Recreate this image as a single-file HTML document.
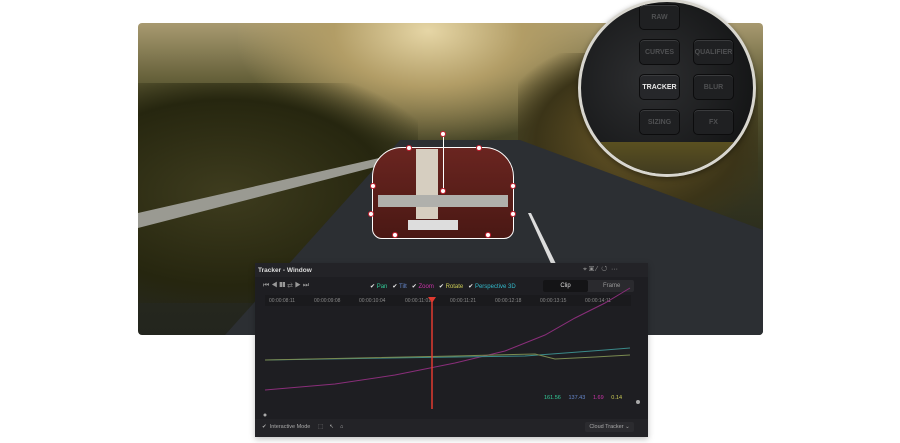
<!DOCTYPE html>
<html><head><style>
*{margin:0;padding:0;box-sizing:border-box}
body{width:900px;height:443px;background:#fff;position:relative;overflow:hidden;font-family:"Liberation Sans",sans-serif}
.photo{position:absolute;left:138px;top:23px;width:625px;height:312px;border-radius:4px;overflow:hidden;
background:linear-gradient(180deg,#a89a70 0%,#5e5a34 20%,#3a3a20 45%,#2a2c1e 70%,#23251e 100%)}
.p{position:absolute}
.circ{position:absolute;left:578px;top:-1px;width:178px;height:178px;border-radius:50%;background:radial-gradient(circle at 40% 45%,#2e2f31,#151617 75%);border:3px solid #d8d6cf;box-shadow:0 2px 6px rgba(0,0,0,.4);overflow:hidden}
.k{position:absolute;width:41px;height:26px;border-radius:5px;background:#1f2022;border:1px solid #0c0c0d;box-shadow:inset 0 1px 0 #3a3b3d;color:#4f5052;font-size:7px;font-weight:bold;text-align:center;line-height:25px}
.panel{position:absolute;left:255px;top:263px;width:393px;height:174px;background:#1e1e22;box-shadow:0 2px 6px rgba(0,0,0,.25);color:#bbb;font-size:6px}
.t{position:absolute}
.d{position:absolute;width:6px;height:6px;border-radius:50%;background:#fff;border:1.5px solid #c23}
</style></head><body>
<div class="photo">
 <div class="p" style="left:100px;top:-20px;width:380px;height:140px;background:radial-gradient(ellipse at 50% 20%,#e6d6a6 0%,#b29d66 35%,transparent 72%)"></div>
 <div class="p" style="left:-40px;top:60px;width:320px;height:220px;background:radial-gradient(ellipse at 40% 50%,#3e3c1e,#26260f 60%,transparent 85%)"></div>
 <div class="p" style="left:380px;top:30px;width:240px;height:170px;background:radial-gradient(ellipse at 50% 50%,#6d5a28,#3b3418 60%,transparent 85%)"></div>
 <div class="p" style="left:0;top:0;width:625px;height:312px;background:#2c2f33;clip-path:polygon(262px 117px,382px 117px,625px 207px,625px 312px,87px 312px)"></div>
 <div class="p" style="left:0;top:0;width:625px;height:312px;background:#9a9a92;clip-path:polygon(0 190px,250px 133px,252px 140px,0 205px)"></div>
 <div class="p" style="left:0;top:0;width:625px;height:312px;background:#ddd;clip-path:polygon(390px 190px,393px 190px,420px 245px,415px 245px)"></div>
 <div class="p" style="left:234px;top:124px;width:142px;height:92px;border-radius:30px 30px 10px 10px;background:linear-gradient(180deg,#6a2520,#4a1814);border:1.5px solid #fff"></div>
 <div class="p" style="left:278px;top:126px;width:22px;height:70px;background:#d6cec0"></div>
 <div class="p" style="left:240px;top:172px;width:130px;height:12px;background:#b0b0ac"></div>
 <div class="p" style="left:270px;top:197px;width:50px;height:10px;background:#ddd"></div>
 <div class="p" style="left:305px;top:110px;width:1px;height:60px;background:#fff"></div>
 <div class="d" style="left:302px;top:108px"></div><div class="d" style="left:302px;top:165px"></div>
 <div class="d" style="left:268px;top:122px"></div><div class="d" style="left:338px;top:122px"></div>
 <div class="d" style="left:232px;top:160px"></div><div class="d" style="left:372px;top:160px"></div>
 <div class="d" style="left:254px;top:209px"></div><div class="d" style="left:347px;top:209px"></div>
 <div class="d" style="left:230px;top:188px"></div><div class="d" style="left:372px;top:188px"></div>
</div>
<div class="circ">
 <div class="k" style="left:58px;top:2px">RAW</div>
 <div class="k" style="left:58px;top:37px">CURVES</div>
 <div class="k" style="left:112px;top:37px">QUALIFIER</div>
 <div class="k" style="left:58px;top:72px;color:#e8e8e8;background:#26272a">TRACKER</div>
 <div class="k" style="left:112px;top:72px">BLUR</div>
 <div class="k" style="left:58px;top:107px">SIZING</div>
 <div class="k" style="left:112px;top:107px">FX</div>
 <div class="p" style="left:-10px;top:140px;width:200px;height:40px;background:linear-gradient(180deg,#5a5020,#3a3620)"></div>
</div>
<div class="panel">
 <div class="t" style="left:0;top:0;width:393px;height:14px;background:#232327"></div>
 <div class="t" style="left:3px;top:4px;font-size:6.5px;font-weight:bold;color:#ddd">Tracker - Window</div>
 <div class="t" style="left:328px;top:3px;color:#999;font-size:7px">⌖ ▣ ⁄ &nbsp;↺ &nbsp;···</div>
 <div class="t" style="left:8px;top:19px;color:#999;font-size:7px">⏮ ◀ ❚❚ ⇄ ▶ ⏭</div>
 <div class="t" style="left:115px;top:20px;font-size:6px"><span style="color:#eee">✔</span> <span style="color:#3c9">Pan</span> &nbsp; <span style="color:#eee">✔</span> <span style="color:#68c">Tilt</span> &nbsp; <span style="color:#eee">✔</span> <span style="color:#c3a">Zoom</span> &nbsp; <span style="color:#eee">✔</span> <span style="color:#cc5">Rotate</span> &nbsp; <span style="color:#eee">✔</span> <span style="color:#3bc">Perspective 3D</span></div>
 <div class="t" style="left:288px;top:17px;width:91px;height:12px;background:#2a2a2e;border-radius:2px"></div>
 <div class="t" style="left:288px;top:17px;width:45px;height:12px;background:#141416;border-radius:2px;text-align:center;line-height:12px;color:#ddd">Clip</div>
 <div class="t" style="left:348px;top:20px;color:#999">Frame</div>
 <div class="t" style="left:10px;top:32px;width:366px;height:11px;background:#1a1a1d"></div>
 <div class="t" style="left:14px;top:35px;color:#888;font-size:5px">00:00:08:11</div>
 <div class="t" style="left:59px;top:35px;color:#888;font-size:5px">00:00:09:08</div>
 <div class="t" style="left:104px;top:35px;color:#888;font-size:5px">00:00:10:04</div>
 <div class="t" style="left:150px;top:35px;color:#888;font-size:5px">00:00:11:01</div>
 <div class="t" style="left:195px;top:35px;color:#888;font-size:5px">00:00:11:21</div>
 <div class="t" style="left:240px;top:35px;color:#888;font-size:5px">00:00:12:18</div>
 <div class="t" style="left:285px;top:35px;color:#888;font-size:5px">00:00:13:15</div>
 <div class="t" style="left:330px;top:35px;color:#888;font-size:5px">00:00:14:11</div>
 <svg class="t" style="left:0;top:0" width="393" height="174">
  <polyline fill="none" stroke="#8a2e7a" stroke-width="1" points="10,127 80,121 140,112 200,100 250,88 290,72 320,55 350,40 375,25"/>
  <polyline fill="none" stroke="#3a8a8a" stroke-width="1" points="10,97 200,94 270,93 310,90 350,87 375,85"/>
  <polyline fill="none" stroke="#7a8a50" stroke-width="1" points="10,97 200,93 280,91 300,96 340,94 375,92"/>
  <line x1="177" y1="37" x2="177" y2="146" stroke="#e03a30" stroke-width="1.5"/>
  <polygon points="173,34 181,34 177,40" fill="#e03a30"/>
  <circle cx="10" cy="152" r="1.5" fill="#aaa"/><circle cx="383" cy="139" r="2" fill="#aaa"/>
 </svg>
 <div class="t" style="left:289px;top:132px;font-size:5.5px"><span style="color:#3c9">161.56</span> &nbsp;&nbsp;&nbsp; <span style="color:#68c">137.43</span> &nbsp;&nbsp;&nbsp; <span style="color:#c3a">1.69</span> &nbsp;&nbsp;&nbsp; <span style="color:#cc5">0.14</span></div>
 <div class="t" style="left:0;top:156px;width:393px;height:18px;background:#232327"></div>
 <div class="t" style="left:7px;top:161px;color:#aaa;font-size:5.5px">✔ &nbsp;Interactive Mode &nbsp;&nbsp;&nbsp; ⬚ &nbsp;&nbsp; ↖ &nbsp;&nbsp; ⌂</div>
 <div class="t" style="left:330px;top:159px;width:49px;height:10px;background:#2b2b2f;border-radius:2px;color:#aaa;font-size:5.5px;line-height:10px;text-align:center">Cloud Tracker ⌄</div>
</div>
</body></html>
